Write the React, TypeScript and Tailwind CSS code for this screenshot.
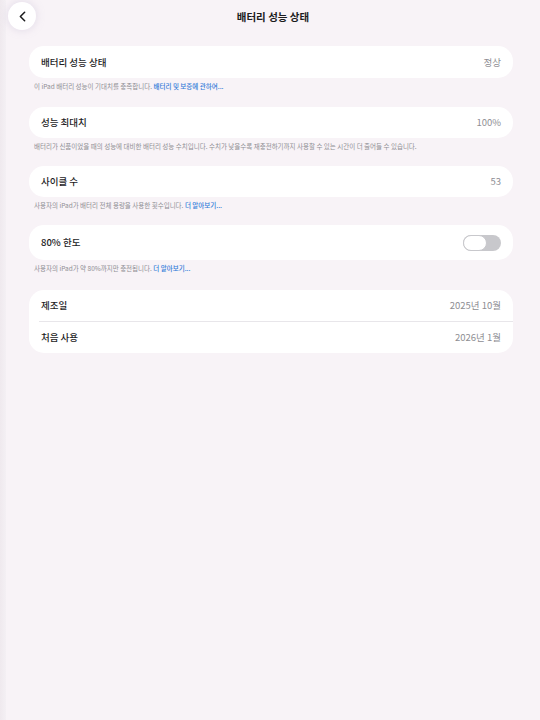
import { ChevronLeft } from "lucide-react";

const font = { fontFamily: '"Noto Sans CJK KR", "Noto Sans", sans-serif' };

function Row({ label, value, h = "h-[31px]" }: { label: string; value: string; h?: string }) {
  return (
    <div className={`flex ${h} items-center justify-between px-3`}>
      <span className="text-[9.5px] font-medium text-[#1c1c1e]">{label}</span>
      <span className="text-[9.5px] text-[#8e8e93]">{value}</span>
    </div>
  );
}

function Footer({ text, link }: { text: string; link?: string }) {
  return (
    <p className="mt-[4px] px-[5px] text-[6.5px] leading-[9px] text-[#8e8e93]">
      {text}
      {link && <span className="font-medium text-[#2f7ad8]"> {link}</span>}
    </p>
  );
}

export default function App() {
  return (
    <div style={font} className="relative h-[720px] w-[540px] overflow-hidden bg-[#f8f3f7]">
      <div className="absolute left-0 top-0 h-full w-[6px] bg-gradient-to-r from-[#efe9ee] to-[#f4f0f4]" />

      <div className="relative flex h-[33px] items-center justify-center">
        <button className="absolute left-[8px] top-[2px] flex h-[28px] w-[28px] items-center justify-center rounded-full bg-white shadow-[0_0_8px_rgba(180,170,200,0.35)]">
          <ChevronLeft size={17} strokeWidth={2.2} className="text-[#1c1c1e]" />
        </button>
        <h1 className="ml-[6px] text-[10.5px] font-bold text-[#1c1c1e]">배터리 성능 상태</h1>
      </div>

      <div className="ml-[29px] mr-[27px] mt-[13px]">
        <div className="rounded-[15px] bg-white">
          <Row label="배터리 성능 상태" value="정상" h="h-[32px]" />
        </div>
        <Footer text="이 iPad 배터리 성능이 기대치를 충족합니다." link="배터리 및 보증에 관하여..." />

        <div className="mt-[16px] rounded-[15px] bg-white">
          <Row label="성능 최대치" value="100%" />
        </div>
        <Footer text="배터리가 신품이었을 때의 성능에 대비한 배터리 성능 수치입니다. 수치가 낮을수록 재충전하기까지 사용할 수 있는 시간이 더 줄어들 수 있습니다." />

        <div className="mt-[15px] rounded-[15px] bg-white">
          <Row label="사이클 수" value="53" />
        </div>
        <Footer text="사용자의 iPad가 배터리 전체 용량을 사용한 횟수입니다." link="더 알아보기..." />

        <div className="mt-[15px] flex h-[35px] items-center justify-between rounded-[15px] bg-white px-3">
          <span className="text-[9.5px] font-medium text-[#1c1c1e]">80% 한도</span>
          <div className="flex h-[16px] w-[38px] items-center rounded-full bg-[#c8c8cc]">
            <div className="h-[16px] w-[24px] rounded-full border border-[#c8c8cc] bg-white" />
          </div>
        </div>
        <Footer text="사용자의 iPad가 약 80%까지만 충전됩니다." link="더 알아보기..." />

        <div className="mt-[17px] rounded-[15px] bg-white">
          <Row label="제조일" value="2025년 10월" />
          <div className="ml-[10px] h-px bg-[#e8e6ea]" />
          <Row label="처음 사용" value="2026년 1월" />
        </div>
      </div>
    </div>
  );
}
